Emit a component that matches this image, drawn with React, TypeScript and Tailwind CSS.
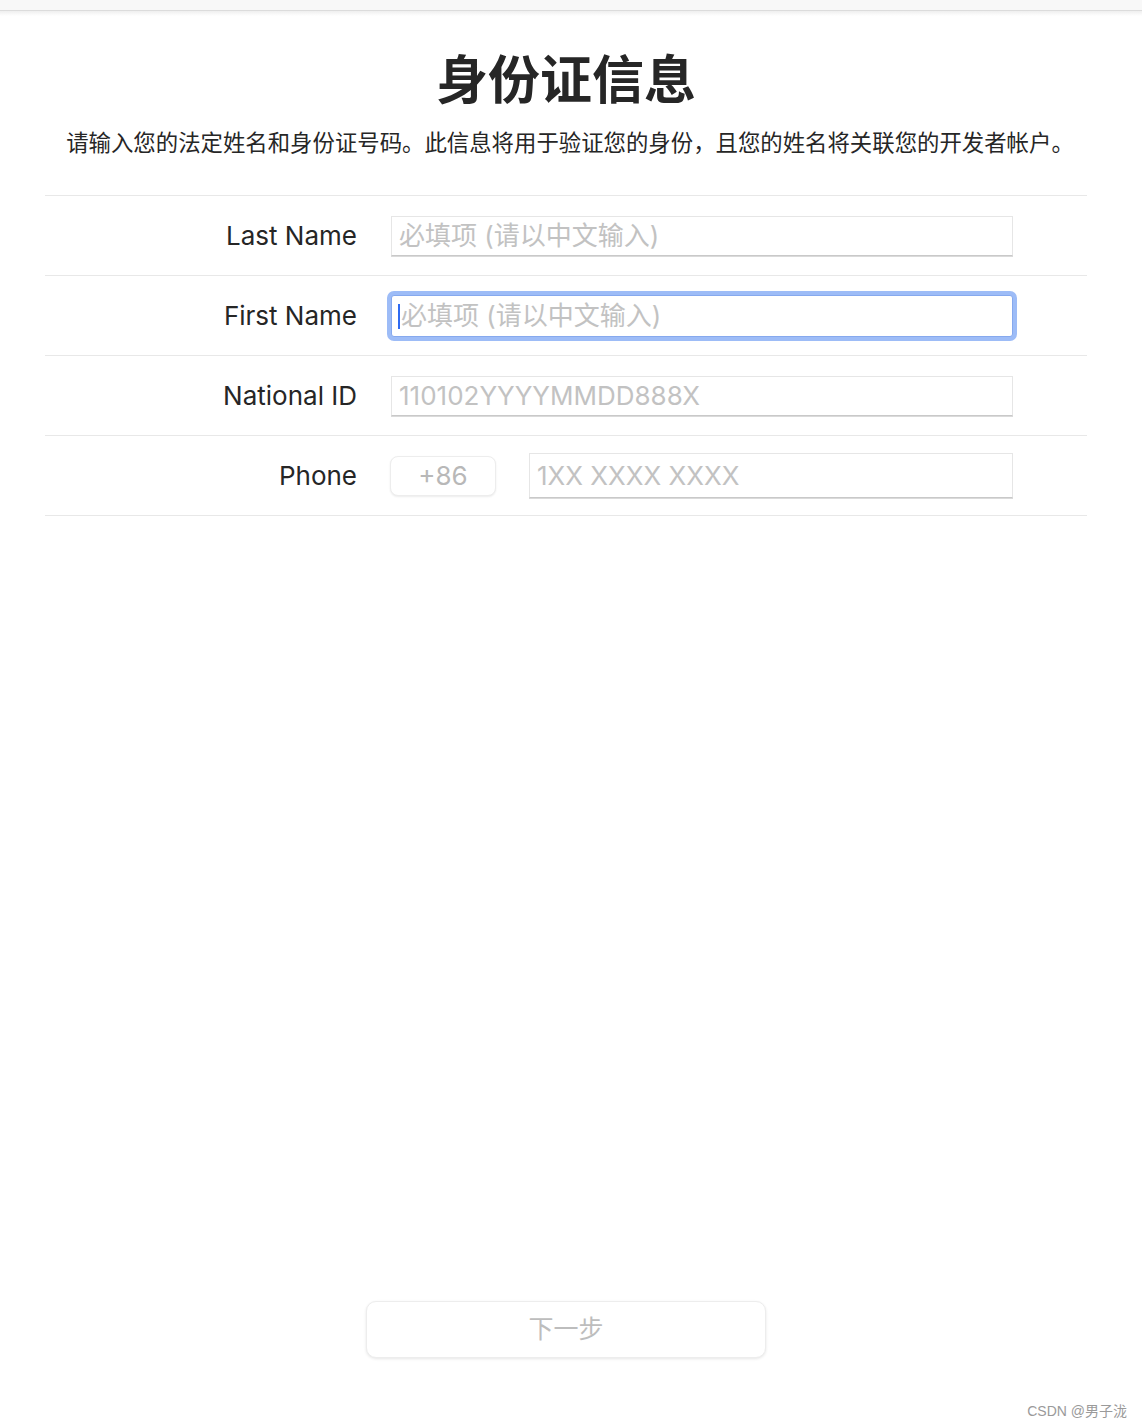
import React from "react";

const font = { fontFamily: '"Inter", "Noto Sans CJK SC", sans-serif' };

function Row({ label, children }: { label: string; children: React.ReactNode }) {
  return (
    <div className="flex h-[80px] items-center border-b border-[#e8e8e8]">
      <div className="w-[312px] text-right text-[26px] leading-none text-[#262626]">
        {label}
      </div>
      <div className="ml-[34px] flex items-center">{children}</div>
    </div>
  );
}

function TextInput({ placeholder, width }: { placeholder: string; width: string }) {
  return (
    <input
      placeholder={placeholder}
      style={font}
      className={`${width} h-[40px] border border-[#e6e6e6] border-b-[#c9c9c9] bg-white px-[7px] text-[26px] text-[#262626] shadow-[0_1px_0_#dadada] outline-none placeholder:text-[#c2c2c2]`}
    />
  );
}

export default function App() {
  return (
    <div className="min-h-[1428px] w-full bg-white" style={font}>
      <div className="h-[10px] bg-[#f8f8f8]" />
      <div className="h-[6px] border-t border-[#dcdcdc] bg-gradient-to-b from-[#efefef] to-white" />

      <div className="w-[1132px]">
        <h1 className="mt-[39px] text-center text-[52px] font-bold leading-[52px] text-[#262626]">
          身份证信息
        </h1>
        <p className="mt-[21px] pl-[8px] text-center text-[22.4px] leading-[30px] text-[#262626]">
          请输入您的法定姓名和身份证号码。此信息将用于验证您的身份，且您的姓名将关联您的开发者帐户。
        </p>

        <div className="mx-[45px] mt-[37px] border-t border-[#e8e8e8]">
          <Row label="Last Name">
            <TextInput placeholder="必填项 (请以中文输入)" width="w-[622px]" />
          </Row>
          <Row label="First Name">
            <div className="relative">
              <input
                placeholder="必填项 (请以中文输入)"
                style={font}
                className="h-[42px] w-[622px] rounded-[3px] border border-[#86a9ee] bg-white px-[9px] text-[26px] outline-none ring-[4px] ring-[#9dbcf7] placeholder:text-[#c2c2c2]"
              />
              <span className="absolute left-[7px] top-[9px] h-[25px] w-[2px] bg-[#2f6bf2]" />
            </div>
          </Row>
          <Row label="National ID">
            <TextInput placeholder="110102YYYYMMDD888X" width="w-[622px]" />
          </Row>
          <Row label="Phone">
            <div className="-ml-[1px] flex h-[40px] w-[106px] items-center justify-center rounded-[8px] border border-[#ededed] bg-white text-[26px] leading-none text-[#b8b8b8] shadow-[0_1px_2px_rgba(0,0,0,0.08)]">
              +86
            </div>
            <input
              placeholder="1XX XXXX XXXX"
              style={font}
              className="ml-[33px] h-[45px] w-[484px] border border-[#e6e6e6] border-b-[#c9c9c9] bg-white px-[7px] text-[26px] text-[#262626] shadow-[0_1px_0_#dadada] outline-none placeholder:text-[#c2c2c2]"
            />
          </Row>
        </div>

        <div className="mt-[785px] flex justify-center">
          <button
            style={font}
            className="h-[57px] w-[400px] rounded-[10px] border border-[#ededed] bg-white text-[25px] text-[#bdbdbd] shadow-[0_1px_3px_rgba(0,0,0,0.1)]"
          >
            下一步
          </button>
        </div>
      </div>

      <div className="mt-[46px] flex justify-end pr-[15px]">
        <span
          className="text-[14px] leading-none text-[#9a9a9a]"
          style={{ fontFamily: '"Liberation Sans", "Noto Sans CJK SC", sans-serif' }}
        >
          CSDN @男子泷
        </span>
      </div>
    </div>
  );
}
